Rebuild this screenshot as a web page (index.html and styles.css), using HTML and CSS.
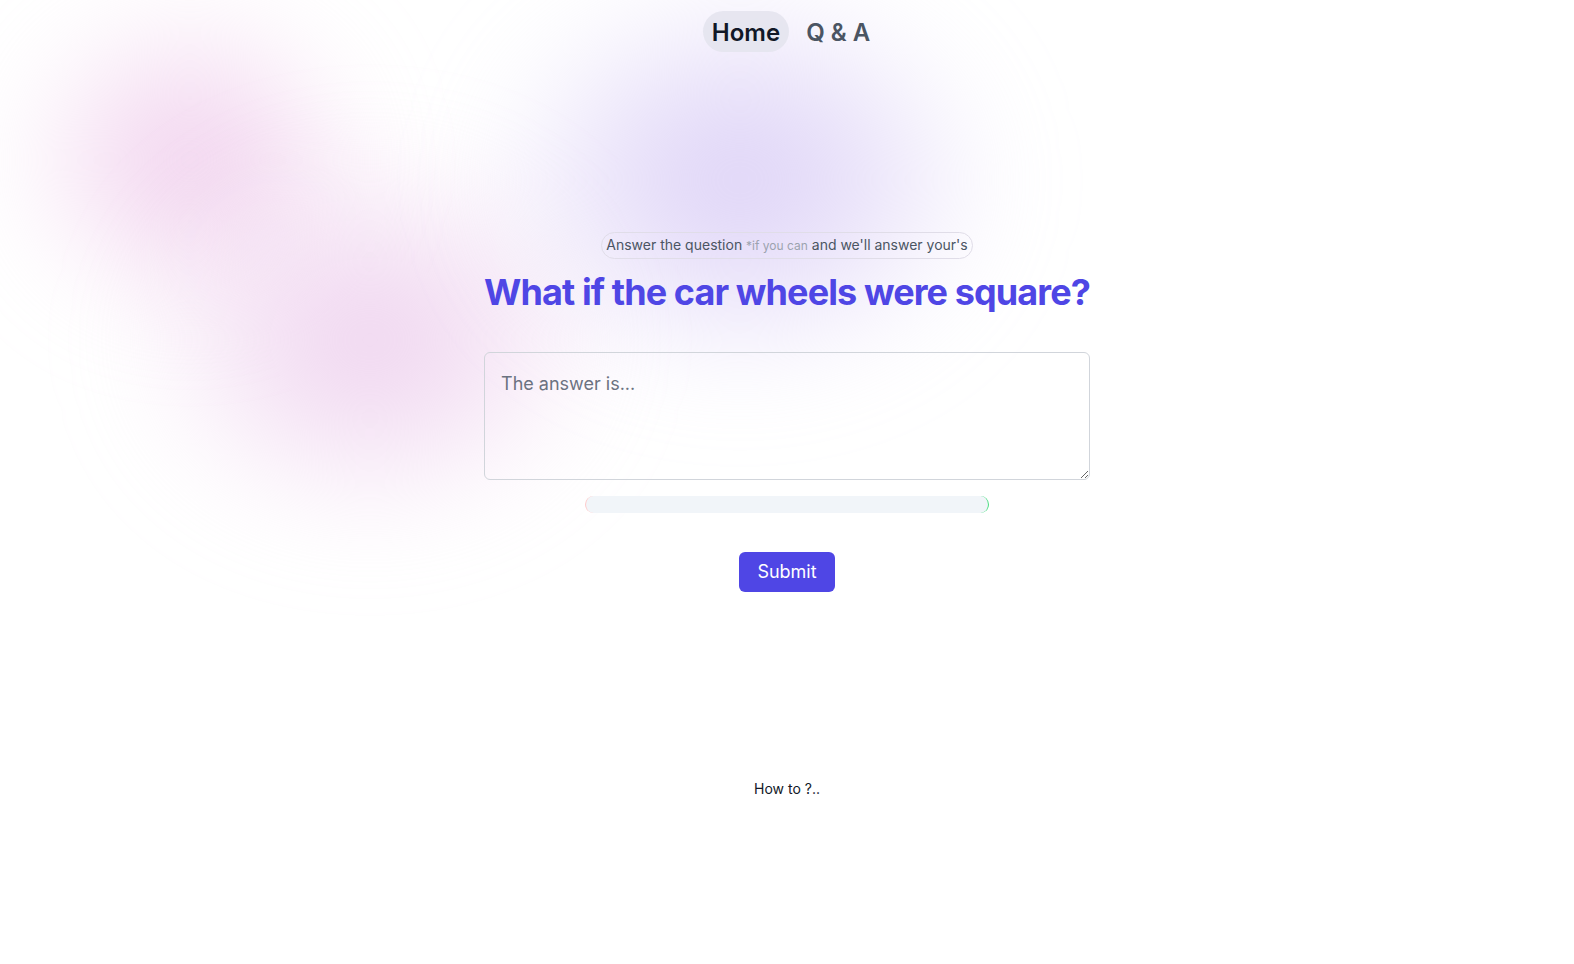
FILE: index.html
```html
<!DOCTYPE html>
<html lang="en">
<head>
<meta charset="utf-8">
<title>Answer the question</title>
<link rel="stylesheet" href="styles.css">
</head>
<body>
<div class="bg" aria-hidden="true">
  <div class="blob blob-pink-1"></div>
  <div class="blob blob-pink-2"></div>
  <div class="blob blob-purple"></div>
</div>
<header class="nav">
  <a class="nav-link active" href="#">Home</a>
  <a class="nav-link" href="#">Q &amp; A</a>
</header>
<main class="main">
  <div class="card">
    <div class="badge">Answer the question <span class="badge-small">*if you can</span> and we'll answer your's</div>
    <h1 class="title">What if the car wheels were square?</h1>
    <textarea class="answer" placeholder="The answer is..."></textarea>
    <div class="meter"></div>
    <button class="submit" type="button">Submit</button>
  </div>
  <p class="howto">How to ?..</p>
</main>
</body>
</html>
```
FILE: styles.css
```css
* { box-sizing: border-box; }
html, body { margin: 0; padding: 0; }
body {
  font-family: Inter, "Noto Sans", sans-serif;
  background: #ffffff;
  color: #111827;
  min-height: 964px;
  position: relative;
  overflow: hidden;
}
.bg { position: absolute; inset: 0; z-index: 0; pointer-events: none; }
.blob { position: absolute; border-radius: 50%; filter: blur(50px); }
.blob-pink-1 {
  left: 10px; top: 0px; width: 360px; height: 320px;
  background: radial-gradient(closest-side, rgba(238, 200, 234, 0.95), rgba(238, 200, 234, 0.4) 60%, rgba(238, 200, 234, 0));
}
.blob-pink-2 {
  left: 130px; top: 150px; width: 480px; height: 380px;
  background: radial-gradient(closest-side, rgba(236, 204, 236, 0.95), rgba(236, 204, 236, 0.4) 60%, rgba(236, 204, 236, 0));
}
.blob-purple {
  left: 480px; top: -20px; width: 520px; height: 400px;
  background: radial-gradient(closest-side, rgba(218, 206, 246, 1), rgba(218, 206, 246, 0.45) 60%, rgba(218, 206, 246, 0));
}
.nav {
  position: relative; z-index: 1;
  display: flex; justify-content: center; align-items: center;
  gap: 8px;
  padding-top: 11px;
  padding-left: 8px;
}
.nav-link {
  font-size: 24px; line-height: 32px; font-weight: 600;
  text-decoration: none; color: #4b5563;
  padding: 6px 9px 3px;
  border-radius: 9999px;
}
.nav-link.active { background: rgba(228, 228, 238, 0.9); color: #111827; }
.main {
  position: relative; z-index: 1;
  display: flex; flex-direction: column; align-items: center;
  padding-top: 180px;
}
.card { display: flex; flex-direction: column; align-items: center; }
.badge {
  font-size: 14px; line-height: 20px; color: #4b5563;
  border: 1px solid #e0dde8; border-radius: 9999px;
  padding: 2px 4px 2px 4px;
}
.badge-small { font-size: 12px; color: #9ca3af; }
.title {
  margin: 13px 0 0;
  font-size: 36px; line-height: 40px; font-weight: 700;
  letter-spacing: -0.025em;
  color: #4f46e5;
}
.answer {
  display: block;
  margin-top: 40px;
  width: 100%; height: 128px;
  padding: 17px 16px 16px;
  font-family: inherit; font-size: 18px; line-height: 28px;
  border: 1px solid #d1d5db; border-radius: 6px;
  background: transparent; color: #111827;
  resize: vertical;
}
.answer::placeholder { color: #6b7280; }
.meter {
  margin-top: 16px;
  width: 404px; height: 17px;
  background: #f1f5f9;
  border-radius: 9999px;
  border-left: 1px solid #fecaca;
  border-right: 1px solid #4ade80;
}
.submit {
  margin-top: 39px;
  font-family: inherit; font-size: 18px; line-height: 28px; font-weight: 400;
  color: #ffffff; background: #4f46e5;
  border: 0; border-radius: 6px;
  padding: 6px 18px;
  cursor: pointer;
}
.howto {
  margin: 187px 0 0;
  font-size: 14px; line-height: 20px; font-weight: 400;
  color: #111827;
}
```
